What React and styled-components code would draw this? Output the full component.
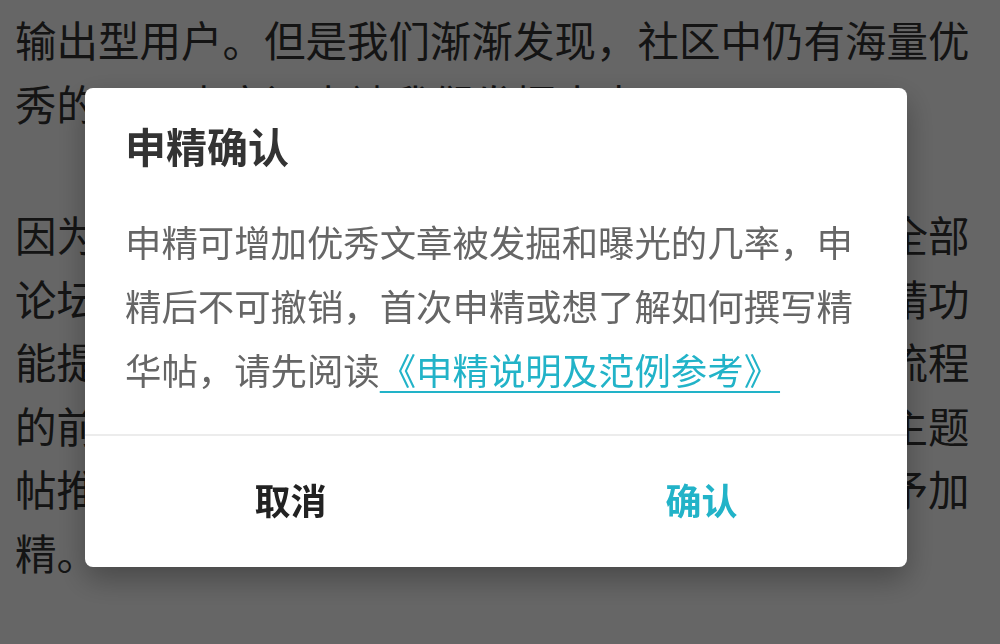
import React from "react";
import styled, { createGlobalStyle } from "styled-components";

const GlobalStyle = createGlobalStyle`
  html, body {
    margin: 0;
    padding: 0;
    background: #ffffff;
    font-family: "Noto Sans CJK SC", "Noto Sans", sans-serif;
  }
`;

const Article = styled.div`
  padding: 8px 15px;
  color: #333333;
  font-size: 41.5px;
  line-height: 63.5px;
`;

const Paragraph = styled.p`
  margin: 0 0 68px 0;
`;

const Overlay = styled.div`
  position: fixed;
  inset: 0;
  background: rgba(0, 0, 0, 0.6);
  display: flex;
  justify-content: center;
  align-items: center;
  padding: 11px 8px 0 0;
`;

const Dialog = styled.div`
  width: 822px;
  background: #ffffff;
  border-radius: 8px;
  box-shadow: 0 12px 30px rgba(0, 0, 0, 0.3);
  overflow: hidden;
`;

const Title = styled.h2`
  margin: 0;
  padding: 32px 40px 0;
  font-size: 41px;
  line-height: 50px;
  font-weight: 700;
  color: #333333;
`;

const Message = styled.p`
  margin: 39px 0 0;
  padding: 0 40px 33px;
  font-size: 36.4px;
  line-height: 64px;
  color: #666666;
`;

const GuideLink = styled.a`
  color: #22b3c8;
  text-decoration: underline;
  text-underline-offset: 6px;
  text-decoration-thickness: 2px;
`;

const Divider = styled.div`
  height: 2px;
  background: #ececec;
`;

const ButtonRow = styled.div`
  display: flex;
  height: 131px;
`;

const ActionButton = styled.button`
  flex: 1;
  border: none;
  background: transparent;
  font-family: inherit;
  font-size: 36px;
  font-weight: 700;
  color: ${(p) => (p.$primary ? "#22b3c8" : "#222222")};
  padding: 0 0 6px 0;
  cursor: pointer;
`;

const App = () => {
  return (
    <>
      <GlobalStyle />
      <Article>
        <Paragraph>
          输出型用户。但是我们渐渐发现，社区中仍有海量优秀的UGC内容还未被我们发掘出来。
        </Paragraph>
        <Paragraph>
          因为精华帖评选依赖版主的人工筛选，难以覆盖全部论坛中的优质内容，所以我们推出了用户自助申精功能提供给所有用户使用。用户申精后将进入审核流程的前提是内容优质。通过审核的帖子将作为优质主题帖推荐至首页，未通过审核的帖子版主可酌情给予加精。
        </Paragraph>
      </Article>

      <Overlay>
        <Dialog>
          <Title>申精确认</Title>
          <Message>
            申精可增加优秀文章被发掘和曝光的几率，申精后不可撤销，首次申精或想了解如何撰写精华帖，请先阅读
            <GuideLink href="#">《申精说明及范例参考》</GuideLink>
          </Message>
          <Divider />
          <ButtonRow>
            <ActionButton>取消</ActionButton>
            <ActionButton $primary>确认</ActionButton>
          </ButtonRow>
        </Dialog>
      </Overlay>
    </>
  );
};

export default App;
